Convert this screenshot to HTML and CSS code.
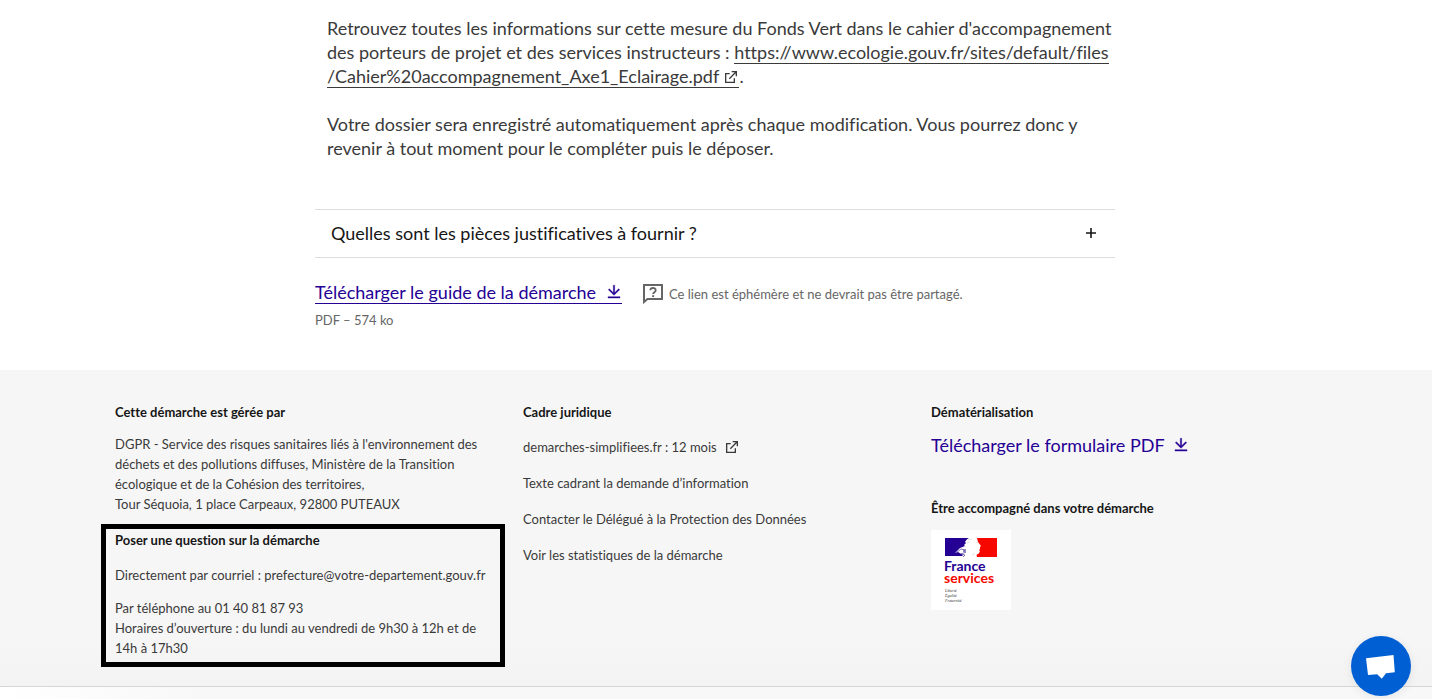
FILE: index.html
```html
<!DOCTYPE html>
<html lang="fr">
<head>
<meta charset="utf-8">
<meta name="viewport" content="width=device-width, initial-scale=1">
<title>Démarche – Fonds Vert</title>
<link rel="stylesheet" href="styles.css">
</head>
<body>
<svg class="sprite" aria-hidden="true">
  <symbol id="icon-external" viewBox="0 0 24 24"><path d="M10 6v2H5v11h11v-5h2v7H3V6zM21 3v8h-2V6.400l-8.800 8.800-1.400-1.400L17.600 5H13V3z" fill="currentColor"/></symbol>
  <symbol id="icon-download" viewBox="0 0 24 24"><path d="M3 19h18v2H3zm10-5.800l6-6.100 1.500 1.400L12 17 3.500 8.500 5 7.100l6 6.100V2h2z" fill="currentColor" stroke="currentColor" stroke-width="0.600"/></symbol>
</svg>
<main class="main">
  <div class="intro">
    <p>Retrouvez toutes les informations sur cette mesure du Fonds Vert dans le cahier d'accompagnement<br>des porteurs de projet et des services instructeurs : <a class="text-link" href="#cahier">https://www.ecologie.gouv.fr/sites/default/files<br>/Cahier%20accompagnement_Axe1_Eclairage.pdf <svg class="icon-inline" aria-hidden="true"><use href="#icon-external"/></svg></a>.</p>
    <p>Votre dossier sera enregistré automatiquement après chaque modification. Vous pourrez donc y<br>revenir à tout moment pour le compléter puis le déposer.</p>
  </div>
  <button class="accordion" type="button" aria-expanded="false">
    <span>Quelles sont les pièces justificatives à fournir ?</span>
    <svg class="icon-plus" viewBox="0 0 10 10" aria-hidden="true"><path d="M4.200 0h1.600v4.200H10v1.600H5.800V10H4.200V5.800H0V4.200h4.200z" fill="currentColor"/></svg>
  </button>
  <div class="guide">
    <a class="download underlined" href="#guide"><span>Télécharger le guide de la démarche</span><svg class="icon-download" aria-hidden="true"><use href="#icon-download"/></svg></a>
    <p class="notice"><svg class="icon-question" viewBox="0 0 20 20" aria-hidden="true"><path d="M1 1h18v14H4.500L1 18z" fill="none" stroke="currentColor" stroke-width="2"/><path d="M7.300 6.300C7.500 3.200 12.700 3.300 12.700 6.200c0 2-2.600 1.900-2.600 3.900" fill="none" stroke="currentColor" stroke-width="1.800"/><path d="M9.100 11.200h2V13h-2z" fill="currentColor"/></svg>Ce lien est éphémère et ne devrait pas être partagé.</p>
  </div>
  <p class="detail">PDF – 574 ko</p>
</main>
<footer class="footer">
  <div class="columns">
    <div class="column">
      <h2>Cette démarche est gérée par</h2>
      <p class="address">DGPR - Service des risques sanitaires liés à l'environnement des<br>déchets et des pollutions diffuses, Ministère de la Transition<br>écologique et de la Cohésion des territoires,<br>Tour Séquoia, 1 place Carpeaux, 92800 PUTEAUX</p>
      <section class="contact">
        <h2>Poser une question sur la démarche</h2>
        <p class="mail"><a href="mailto:prefecture@votre-departement.gouv.fr">Directement par courriel : prefecture@votre-departement.gouv.fr</a></p>
        <p><a href="tel:+33140818793">Par téléphone au 01 40 81 87 93</a><br>Horaires d’ouverture : du lundi au vendredi de 9h30 à 12h et de<br>14h à 17h30</p>
      </section>
    </div>
    <div class="column">
      <h2>Cadre juridique</h2>
      <ul class="links">
        <li><a href="#conservation">demarches-simplifiees.fr : 12 mois<svg class="icon-external" aria-hidden="true"><use href="#icon-external"/></svg></a></li>
        <li><a href="#texte">Texte cadrant la demande d’information</a></li>
        <li><a href="#dpo">Contacter le Délégué à la Protection des Données</a></li>
        <li><a href="#stats">Voir les statistiques de la démarche</a></li>
      </ul>
    </div>
    <div class="column">
      <h2>Dématérialisation</h2>
      <a class="download form-link" href="#formulaire"><span>Télécharger le formulaire PDF</span><svg class="icon-download" aria-hidden="true"><use href="#icon-download"/></svg></a>
      <h2>Être accompagné dans votre démarche</h2>
      <a class="logo" href="#france-services">
        <svg viewBox="0 0 80 80" role="img" aria-label="France services">
          <path d="M0 0h80v80H0z" fill="#fff"/>
          <path d="M14 8h24c-2 1-3 2-4 4l1 1-2 2 1 1-5 2-5 5 3-1 5 3-1 1H14z" fill="#250095"/>
          <path d="M46 8h20v19H46c-1-2 0-3 1-3 2-1 1-2 2-3l-1-1 1-1v-2l1-1-3-4z" fill="#f60700"/>
          <path d="M25 23l5-4 5 1-3 1 3 1-5 2 4 1-2 2" fill="none" stroke="#4a3a9c" stroke-width="0.700"/>
          <path d="M37 10l4-1M36 13l3-1M45 12l2 1M41 25l3-2" fill="none" stroke="#ccc" stroke-width="0.600"/>
          <text class="logo-name" x="13" y="41" fill="#250095">France</text>
          <text class="logo-name" x="13" y="53" fill="#f60700">services</text>
          <text class="logo-motto" x="14" y="62">Liberté</text>
          <text class="logo-motto" x="14" y="67">Égalité</text>
          <text class="logo-motto" x="14" y="72">Fraternité</text>
        </svg>
      </a>
    </div>
  </div>
</footer>
<div class="below"></div>
<button class="chat" type="button" aria-label="Ouvrir la messagerie"><svg viewBox="0 0 60 60" aria-hidden="true"><path d="M15 22.300L42.500 19l1.300 17.300-8.800.900-4.200 5.600-4.600-4.500-9.200.700z" fill="#fff"/></svg></button>
</body>
</html>
```
FILE: styles.css
```css
* { box-sizing: border-box; }
body {
  margin: 0;
  background: #fff;
  color: #3a3a3a;
  font-family: Lato, "Noto Sans", sans-serif;
  font-size: 18px;
  line-height: 24px;
  font-variant-ligatures: none;
}
p, h2, ul { margin: 0; padding: 0; }
a { color: inherit; text-decoration: none; }
button { font: inherit; border: 0; background: none; cursor: pointer; }
.sprite { display: none; }

.main {
  max-width: 802px;
  margin: 0 auto;
  padding: 16px 2px 40px 0;
}
.intro {
  display: grid;
  gap: 24px;
  padding: 0 12px;
  margin-bottom: 49px;
  white-space: nowrap;
}
.text-link { border-bottom: 1px solid currentColor; }
.icon-inline { width: 16px; height: 16px; vertical-align: -2px; }
.accordion {
  display: flex;
  align-items: center;
  justify-content: space-between;
  width: 100%;
  padding: 11px 19px 12px 16px;
  border-top: 1px solid #ddd;
  border-bottom: 1px solid #ddd;
  color: #161616;
  text-align: left;
}
.icon-plus { width: 10px; height: 10px; }
.guide {
  display: flex;
  align-items: center;
  gap: 21px;
  margin: 22px 0 6px;
}
.download {
  display: inline-flex;
  align-items: center;
  color: #250095;
}
.underlined { gap: 10px; box-shadow: inset 0 -1px currentColor; }
.icon-download { width: 16px; height: 16px; }
.notice, .detail {
  color: #666;
  font-size: 13px;
  line-height: 20px;
}
.notice { display: flex; align-items: center; gap: 6px; padding-top: 4px; }
.icon-question { width: 20px; height: 20px; }

.footer {
  padding: 32px 0 19px;
  border-bottom: 1px solid #d6d6d6;
  background: linear-gradient(#f6f6f6 85%, #f3f3f3);
  font-size: 13px;
  line-height: 20px;
}
.columns {
  display: grid;
  grid-template-columns: repeat(3, 1fr);
  gap: 24px;
  max-width: 1202px;
  margin: 0 auto;
  padding-right: 2px;
}
.column { min-width: 0; }
.footer h2 {
  margin-bottom: 12px;
  color: #161616;
  font-size: 13px;
  line-height: 20px;
}
.contact {
  margin: 10px -6px 0 -14px;
  padding: 1px 0 4px 9px;
  border: 5px solid #000;
  white-space: nowrap;
}
.address { white-space: nowrap; }
.mail { margin: 15px 0 13px; }
.links {
  display: grid;
  gap: 16px;
  padding-top: 3px;
  list-style: none;
}
.links a { display: flex; align-items: center; gap: 7px; }
.icon-external { width: 16px; height: 16px; }
.form-link {
  gap: 8px;
  margin: -1px 0 41px;
  font-size: 18px;
  line-height: 24px;
}
.logo, .logo svg { display: block; width: 80px; height: 80px; }
.logo-name { font: 700 14px Lato, sans-serif; }
.logo-motto { font: italic 4px "Liberation Serif", serif; fill: #333; }
.below {
  height: 12px;
  background: linear-gradient(90deg, #fff, #f8f8f8 200px);
}
.chat {
  position: fixed;
  right: 21px;
  bottom: 3px;
  width: 60px;
  height: 60px;
  padding: 0;
  border-radius: 50%;
  background: #0060d3;
  box-shadow: 0 2px 10px rgba(0, 0, 0, 0.08);
}
.chat svg { display: block; width: 60px; height: 60px; }
```
